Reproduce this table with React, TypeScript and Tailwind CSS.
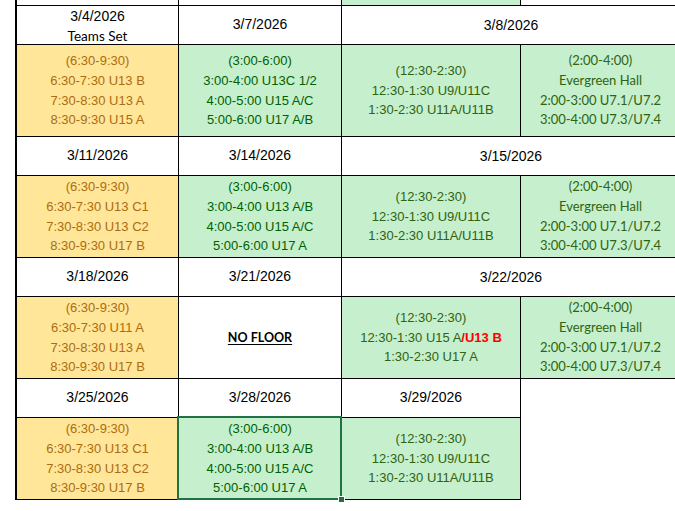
import React from "react"

// スプレッドシート風の練習スケジュール表
const arial = "font-[family-name:'Liberation_Sans',Arial,sans-serif]"
const aptos = "font-[family-name:Lato,'Liberation_Sans',sans-serif]"

const yellow = "bg-[#ffe699] text-[#ad6c10]"
const green = "bg-[#c6efce] text-[#006100]"
const olive = "bg-[#c6efce] text-[#2f630f]"

function Cell({ className = "", children }: { className?: string; children?: React.ReactNode }) {
  return (
    <div
      className={`border-r border-b border-black flex flex-col items-center justify-center text-center leading-[19.6px] ${className}`}
    >
      {children}
    </div>
  )
}

function Lines({ items }: { items: React.ReactNode[] }) {
  return (
    <>
      {items.map((t, i) => (
        <div key={i} className="whitespace-nowrap">
          {t}
        </div>
      ))}
    </>
  )
}

const evening1 = ["(6:30-9:30)", "6:30-7:30 U13 B", "7:30-8:30 U13 A", "8:30-9:30 U15 A"]
const evening2 = ["(6:30-9:30)", "6:30-7:30 U13 C1", "7:30-8:30 U13 C2", "8:30-9:30 U17 B"]
const evening3 = ["(6:30-9:30)", "6:30-7:30 U11 A", "7:30-8:30 U13 A", "8:30-9:30 U17 B"]

const sat1 = ["(3:00-6:00)", "3:00-4:00 U13C 1/2", "4:00-5:00 U15 A/C", "5:00-6:00 U17 A/B"]
const sat2 = ["(3:00-6:00)", "3:00-4:00 U13 A/B", "4:00-5:00 U15 A/C", "5:00-6:00 U17 A"]

const sun = ["(12:30-2:30)", "12:30-1:30 U9/U11C", "1:30-2:30 U11A/U11B"]
const hall = ["(2:00-4:00)", "Evergreen Hall", "2:00-3:00 U7.1/U7.2", "3:00-4:00 U7.3/U7.4"]

const head = `${arial} text-[14px] text-black`

export default function App() {
  return (
    <div className="w-[675px] h-[511px] overflow-hidden bg-white">
      <div className="ml-[15px] w-[670px] border-l-2 border-black grid grid-cols-[162px_163px_179px_160px] grid-rows-[6px_39px_92px_39px_82px_39px_82px_39px_82px] text-[13px]">
        {/* 前の行の残り */}
        <Cell />
        <Cell />
        <Cell className="bg-[#c6efce]" />
        <Cell />

        {/* 3/4 週 */}
        <Cell className={`${head} leading-[20px] pt-[1px]`}>
          <div>3/4/2026</div>
          <div className={`${aptos} text-[13.5px]`}>Teams Set</div>
        </Cell>
        <Cell className={head}>3/7/2026</Cell>
        <Cell className={`${head} col-span-2 pt-[2px]`}>3/8/2026</Cell>
        <Cell className={`${arial} ${yellow}`}>
          <Lines items={evening1} />
        </Cell>
        <Cell className={`${arial} ${green}`}>
          <Lines items={sat1} />
        </Cell>
        <Cell className={`${arial} ${olive}`}>
          <Lines items={sun} />
        </Cell>
        <Cell className={`${aptos} text-[13px] ${olive}`}>
          <Lines items={hall} />
        </Cell>

        {/* 3/11 週 */}
        <Cell className={head}>3/11/2026</Cell>
        <Cell className={head}>3/14/2026</Cell>
        <Cell className={`${head} col-span-2 pt-[2px]`}>3/15/2026</Cell>
        <Cell className={`${arial} ${yellow}`}>
          <Lines items={evening2} />
        </Cell>
        <Cell className={`${arial} ${green}`}>
          <Lines items={sat2} />
        </Cell>
        <Cell className={`${arial} ${olive}`}>
          <Lines items={sun} />
        </Cell>
        <Cell className={`${aptos} text-[13px] ${olive}`}>
          <Lines items={hall} />
        </Cell>

        {/* 3/18 週 */}
        <Cell className={head}>3/18/2026</Cell>
        <Cell className={head}>3/21/2026</Cell>
        <Cell className={`${head} col-span-2 pt-[2px]`}>3/22/2026</Cell>
        <Cell className={`${arial} ${yellow}`}>
          <Lines items={evening3} />
        </Cell>
        <Cell className={`${aptos} text-[12.5px] font-bold underline underline-offset-2 text-black`}>NO FLOOR</Cell>
        <Cell className={`${arial} ${olive}`}>
          <Lines
            items={[
              "(12:30-2:30)",
              <>
                12:30-1:30 U15 A<span className="font-bold text-[#ff0000]">/U13 B</span>
              </>,
              "1:30-2:30 U17 A",
            ]}
          />
        </Cell>
        <Cell className={`${aptos} text-[13px] ${olive}`}>
          <Lines items={hall} />
        </Cell>

        {/* 3/25 週 */}
        <Cell className={head}>3/25/2026</Cell>
        <Cell className={head}>3/28/2026</Cell>
        <Cell className={head}>3/29/2026</Cell>
        <div />
        <Cell className={`${arial} ${yellow}`}>
          <Lines items={evening2} />
        </Cell>
        <Cell className={`${arial} ${green} relative`}>
          <Lines items={sat2} />
          {/* 選択枠 */}
          <div className="absolute left-[-2px] top-[-2px] right-[-1px] bottom-[-1px] border-2 border-[#1f7244] pointer-events-none" />
          <div className="absolute right-[-4px] bottom-[-4px] w-[7px] h-[7px] bg-[#1f7244] border border-white" />
        </Cell>
        <Cell className={`${arial} ${olive}`}>
          <Lines items={sun} />
        </Cell>
        <div />
      </div>
    </div>
  )
}
